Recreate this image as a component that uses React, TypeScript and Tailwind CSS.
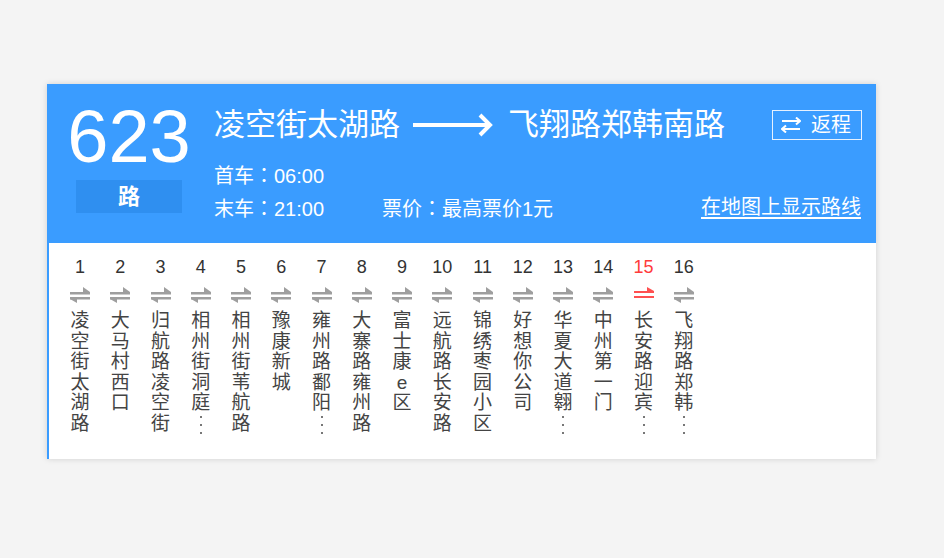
import React from "react";

const stations = [
  "凌空街太湖路",
  "大马村西口",
  "归航路凌空街",
  "相州街洞庭湖路",
  "相州街苇航路",
  "豫康新城",
  "雍州路鄱阳湖路",
  "大寨路雍州路",
  "富士康e区",
  "远航路长安路",
  "锦绣枣园小区",
  "好想你公司",
  "华夏大道翱翔路",
  "中州第一门",
  "长安路迎宾大道",
  "飞翔路郑韩南路",
];

const current = 15;

// the little double arrow under each stop number
function StopArrows({ active }: { active: boolean }) {
  if (active) {
    return (
      <svg width="20" height="16" viewBox="0 0 20 16" className="text-[#ff5050]">
        <rect x="0" y="4" width="20" height="2" fill="currentColor" />
        <polygon points="13,0 13,4 20,4" fill="currentColor" />
        <rect x="0" y="9" width="20" height="2" fill="currentColor" />
      </svg>
    );
  }
  return (
    <svg width="20" height="16" viewBox="0 0 20 16" className="text-[#9e9e9e]">
      <rect x="0" y="5" width="20" height="2.5" fill="currentColor" />
      <polygon points="13,0 13,5 20,5" fill="currentColor" />
      <rect x="0" y="10" width="20" height="2.5" fill="currentColor" />
      <polygon points="0,12 7,12 7,16" fill="currentColor" />
    </svg>
  );
}

function Colon() {
  return <span className="font-['Noto_Sans_CJK_TC']">：</span>;
}

function Station({ no, name }: { no: number; name: string }) {
  const active = no === current;
  const long = name.length > 6;
  const chars = long ? name.slice(0, 5).split("") : name.split("");
  return (
    <div className="w-[40.25px] flex flex-col items-center shrink-0">
      <div className={`text-[18px] leading-[22px] ${active ? "text-[#ff3b3b]" : "text-[#333]"}`}>{no}</div>
      <div className="mt-[9px] h-[16px]">
        <StopArrows active={active} />
      </div>
      <div className="mt-[8px] flex flex-col items-center text-[19px] leading-[20.5px] text-[#444]">
        {chars.map((c, i) => (
          <span key={i} className="block text-center">
            {c}
          </span>
        ))}
        {long && (
          <span className="flex flex-col items-center gap-[6px] pt-[2px] h-[20px]">
            <i className="block w-[2px] h-[2px] bg-[#777]" />
            <i className="block w-[2px] h-[2px] bg-[#777]" />
            <i className="block w-[2px] h-[2px] bg-[#777]" />
          </span>
        )}
      </div>
    </div>
  );
}

export default function App() {
  return (
    <div
      className="min-h-[558px] w-full bg-[#f4f4f4] pt-[84px] pl-[47px]"
      style={{ fontFamily: '"Liberation Sans", "Noto Sans CJK SC", sans-serif' }}
    >
      <div className="w-[829px] bg-white border-l-2 border-[#3a9cff] shadow-[0_0_6px_rgba(0,0,0,0.15)]">
        {/* header */}
        <div className="h-[159px] bg-[#3a9cff] text-white flex pl-[18px] pr-[14px]">
          <div className="w-[124px] flex flex-col items-center pt-[16px]">
            <div className="text-[74px] leading-[74px]">623</div>
            <div className="mt-[6px] w-[106px] h-[33px] bg-[#2f8ff0] flex items-center justify-center text-[22px] font-bold">
              路
            </div>
          </div>

          <div className="flex-1 pl-[23px] pt-[21px]">
            <div className="flex items-center h-[40px]">
              <span className="text-[31px] leading-[40px]">凌空街太湖路</span>
              <svg width="80" height="26" viewBox="0 0 80 26" className="ml-[13px] mr-[15px]">
                <line x1="0" y1="13" x2="76" y2="13" stroke="white" strokeWidth="4" />
                <polyline points="67,3 77,13 67,23" fill="none" stroke="white" strokeWidth="4" />
              </svg>
              <span className="text-[31px] leading-[40px]">飞翔路郑韩南路</span>
              <button className="ml-auto flex items-center w-[90px] h-[30px] border border-[#e6f1ff] pl-[8px] text-[20px] leading-none">
                <svg width="20" height="16" viewBox="0 0 20 16">
                  <line x1="1" y1="4" x2="19" y2="4" stroke="white" strokeWidth="2" />
                  <polyline points="15,0.5 19,4 15,7.5" fill="none" stroke="white" strokeWidth="2" />
                  <line x1="1" y1="12" x2="19" y2="12" stroke="white" strokeWidth="2" />
                  <polyline points="5,8.5 1,12 5,15.5" fill="none" stroke="white" strokeWidth="2" />
                </svg>
                <span className="ml-[10px]">返程</span>
              </button>
            </div>
            <div className="mt-[14px] text-[20px] leading-[31px]">
              首车<Colon />06:00
            </div>
            <div className="flex text-[20px] leading-[31px]">
              <span className="w-[168px]">
                末车<Colon />21:00
              </span>
              <span>
                票价<Colon />最高票价1元
              </span>
              <a className="ml-auto mr-[1px] underline underline-offset-[3px] cursor-pointer">在地图上显示路线</a>
            </div>
          </div>
        </div>

        {/* stops */}
        <div className="h-[216px] flex pl-[11px] pt-[13px]">
          {stations.map((s, i) => (
            <Station key={i} no={i + 1} name={s} />
          ))}
        </div>
      </div>
    </div>
  );
}
